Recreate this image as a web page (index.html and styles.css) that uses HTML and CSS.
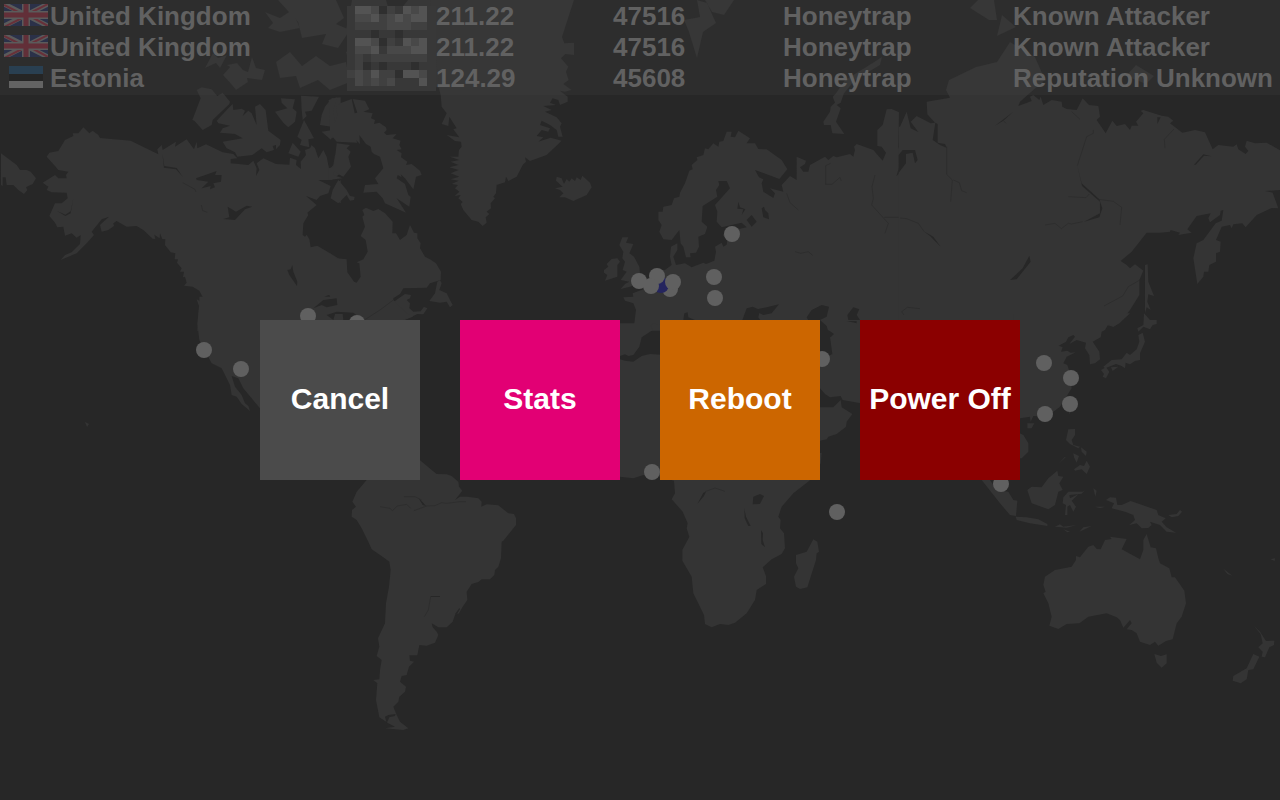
FILE: index.html
```html
<!DOCTYPE html>
<html lang="en">
<head>
<meta charset="utf-8">
<meta name="viewport" content="width=device-width, initial-scale=1">
<title>Attack map</title>
<link rel="stylesheet" href="styles.css">
</head>
<body>
<svg class="map" viewBox="0 0 1280 800" preserveAspectRatio="xMidYMin slice" aria-hidden="true">
  <!-- Alaska and western Canada -->
  <g class="land" transform="translate(0 90) scale(.33333)">
    <path d="M140 200L148 188 175 183 195 150 220 138 218 130 235 130 250 112 268 130 278 122 295 135 300 144 392 152 475 193 472 178 485 165 488 180 528 155 525 170 560 148 582 178 590 155 592 175 618 163 668 187 700 192 712 205 692 207 692 220 745 225 760 212 770 235 768 258 778 240 770 220 790 205 828 222 868 224 870 203 890 210 888 225 903 237 902 215 918 195 915 180 930 175 935 165 945 175 955 205 970 180 980 200 988 240 1000 225 1005 195 1022 190 1022 250 995 270 955 270 992 288 985 310 960 318 950 330 918 318 950 345 922 368 925 375 910 400 908 435 915 440 920 434 928 448 932 472 952 467 1022 509 1022 722 592 722 597 648 590 628 598 632 612 641 614 632 598 602 578 590 552 587 560 578 555 560 549 562 552 545 540 545 545 535 531 518 534 508 524 508 526 490 512 487 495 465 496 448 487 447 480 430 479 445 463 434 466 447 458 446 430 420 410 408 380 410 350 393 340 400 342 408 325 420 305 425 300 405 316 390 327 380 305 388 275 425 282 435 260 460 230 490 205 500 182 510 195 495 215 487 240 462 242 435 230 443 215 430 195 437 190 410 172 412 165 398 148 378 165 340 185 340 203 325 200 308 155 307 140 300 145 290 128 278 165 255 175 265 200 265 198 255 205 245 175 240 165 228z"/>
    <path d="M3 190L50 225 60 240 80 240 92 245 108 265 98 282 85 288 78 292 82 300 72 312 55 300 40 285 20 285 17 262 8 262 8 288 3 285z"/>
    <path d="M590 0L602 25 577 90 583 92 608 120 635 105 638 90 688 42 690 35 668 8 652 18 635 -2 605 -8z"/>
    <path d="M698 42L700 60 725 56 735 62 728 78 745 62 755 70 770 105 765 50 780 42 797 60 805 122 842 150 840 165 828 178 828 165 818 168 822 180 800 187 785 175 757 195 712 200 705 187 680 175 668 155 728 145 705 132 660 128 668 115 690 107 655 100 650 92 680 60z"/>
    <path d="M843 25L885 28 878 55 890 65 885 95 865 112 850 98 825 65 862 55 845 38zM903 17L957 20 935 62 915 65 920 78 908 90 905 60zM912 90L942 145 925 148 928 172 900 165 905 150 892 140zM878 158L902 185 895 200 865 190zM1022 22L995 25 975 50 965 75 960 105 1022 115zM965 125L1022 116 1022 145 1005 140 990 147zM1022 270L1008 283 995 322 1022 340z"/>
    <g class="water">
      <path d="M588 265L650 243 645 255 665 255 663 275 640 280 645 292 630 298 632 288 605 295 625 275 590 270zM683 350L708 365 740 347 757 350 735 358 705 390 670 387 688 382zM862 540L872 538 877 525 880 545 892 575 891 588 868 555z"/>
      <path d="M938 650L965 625 985 615 1012 625 1018 650 990 648 975 640 960 652zM985 690V675L1020 662V680L1000 682 1002 690z"/>
      <path d="M487 190L493 228 530 234 548 260 528 238 492 233zM170 362L196 374 212 364 220 325 212 370 196 378z"/>
    </g>
    <path class="river" d="M548 278L585 298 588 306M604 345L608 362 622 367"/>
  </g>

  <!-- Eastern Canada, Greenland, Iceland -->
  <g class="land" transform="translate(330 80) scale(.33333)">
    <path d="M-4 60L22 52 10 90 14 130 22 105 18 80 30 70 65 57 74 100 82 98 68 57 105 62 118 88 100 95 128 100 123 115 135 120 132 132 148 128 168 142 170 150 162 158 170 165 200 162 188 175 212 182 208 195 215 208 200 210 215 220 213 232 232 245 228 255 245 252 270 272 275 285 258 290 255 305 250 328 225 295 212 283 215 292 203 285 200 295 225 312 235 345 242 350 238 380 200 355 228 398 165 370 158 355 140 335 100 338 105 315 145 312 135 295 160 265 150 230 132 222 125 215 122 200 108 192 88 165 90 192 78 180 82 188 20 185 8 170 0 180V145z"/>
    <path d="M20 190L60 195 50 205 62 215 55 230 63 260 40 290 12 275 10 285 38 295 -4 300V265L12 260zM25 300L50 330 60 348 74 350 72 360 60 362 50 345 25 370 2 355 8 330z"/>
    <path d="M97 390L108 383 130 393 145 387 165 400 188 425 187 460 198 460 210 480 230 465 240 435 252 458 262 460 262 475 272 490 270 505 285 530 300 538 318 550 333 575 332 600 300 610 290 623 220 625 210 642 185 658 180 668 140 703 185 670 225 642 243 645 240 655 230 660 240 670 238 685 250 695 272 694 282 680 292 685 280 703 262 702 225 720 200 750H0V520L20 535 50 538 52 577 72 605 80 608 92 590 88 550 80 547 100 538 113 515 107 480 92 468 105 440 97 410 103 405z"/>
    <path d="M298 663L315 640 322 605 330 600 335 610 328 630 350 640 360 660 368 675 360 682 350 665 330 668z"/>
    <path d="M246 -240H732L696 -129 703 -110 732 -112 732 -75 706 -78 693 -65 715 -40 708 -25 716 0 700 12 725 30 705 35 690 32 713 50 713 65 690 75 685 60 668 55 660 68 678 75 640 78 665 90 645 95 680 112 695 130 690 140 698 170 685 170 680 150 660 135 635 122 630 135 660 145 655 155 635 150 620 168 640 172 625 185 662 173 695 182 650 225 600 243 585 232 588 245 578 255 560 290 535 303 528 290 525 307 500 315 498 340 490 350 495 355 482 370 483 385 470 395 478 402 467 412 470 428 458 438 445 425 425 420 400 390 392 372 398 366 385 355 392 345 374 348 388 335 375 325 384 315 365 312 386 302 362 298 388 290 362 280 386 270 358 262 385 255 362 245 388 240 360 230 385 230 387 210 395 200 393 185 375 183 350 165 388 172 370 148 380 145 358 110 355 138 335 132 350 100 335 80 332 45 320 0z"/>
    <path d="M675 325L698 320 678 302 680 290 695 295 702 312 710 297 718 305 725 295 735 303 740 292 752 300 757 287 780 308 785 322 770 345 730 363 705 352 688 352 700 340 690 330z"/>
    <g class="water"><path d="M0 650L8 655 28 675 30 684 70 690 78 708 62 720 40 705 40 694 0 695V683L28 684 0 680z"/></g>
  </g>

  <!-- High Arctic islands -->
  <g class="land">
    <path d="M265 12L280 18 292 10 300 28 280 32 268 28 273 23zM205 68L213 53 218 58 227 55 220 68 216 63zM223 75L230 67 227 65 237 63 243 70 248 72 252 57 256 68 265 70 262 80 247 78 248 82 236 90 232 85z"/>
    <path d="M278 0H336L344 18 336 24 350 30 338 48 322 44 326 34 302 38 298 22zM276 62L290 52 302 66 316 56 330 66 346 62 350 82 330 90 318 80 300 88 296 76 280 78zM352 0H386L392 20 408 0H430L436 60 440 88 402 78 380 88 352 74 346 52 362 44 346 30z"/>
    <path d="M697 0L700 17 684 20 689 32 697 58 703 32 716 23 707 3zM705 0H734L724 15 712 12zM970 8L978 0H994L997 20H989zM997 36L1002 15 1016 27zM1126 76L1136 65 1154 76 1146 84z"/>
  </g>

  <!-- Europe and western Russia -->
  <g class="land" transform="translate(590 80) scale(.33333)">
    <path d="M42 570L55 560 50 552 65 537 82 535 90 545 82 555V590L45 602 52 585 42 578zM97 472L115 472 108 488 130 492 118 520 132 530 148 560 150 580 165 590 150 610 120 620 92 627 105 612 118 605 92 600 110 575 98 570 105 545 97 535 100 515 88 495z"/>
    <path d="M205 395L218 395 220 380 245 375 252 355 268 350 270 338 285 310 298 272 308 268 305 255 322 240 320 232 340 225 345 205 355 208 370 190 385 200 388 185 400 183 410 155 425 155 422 170 435 172 445 152 465 165 480 175 470 190 495 190 505 207 530 208 575 240 592 268 568 297 495 270 507 292 520 298 515 310 520 335 550 354 555 340 540 325 580 335 575 315 600 288 620 300V230L648 242 645 252 630 262 640 275 655 275 660 255 705 230 715 240 730 228 740 232 780 222 790 230 795 210 792 200 800 192 850 210 878 242 888 218 875 200 862 198V150L878 135 890 88 905 87 927 97 925 200 935 235 918 293 880 282 918 290 945 260 950 225 965 218 970 245 992 255V752H130L138 690 130 670 105 662 100 652 130 650 128 640 160 628 200 575 225 570 245 555 240 530 243 500 262 490 262 510 250 530 258 555 285 550 305 562 340 548 348 552 373 542 378 515 375 500 395 488 400 500 410 494 412 478 398 465 410 455 470 442 455 428 395 442 380 425 382 395 375 375 420 325 410 303 385 303 388 315 378 330 382 350 338 378 335 425 352 440 345 462 325 470 327 500 318 518 300 520 302 532 288 532 280 500 272 490 268 450 245 480 220 478 208 455 215 435 205 420z"/>
    <path d="M765 0L738 40 728 50 735 68 722 80 720 95 700 125 702 135 722 135 727 160 763 162 738 125 752 85 740 75 752 68 762 40 795 0 870 -45 876 -69 830 -40z"/>
    <g class="water">
      <path d="M515 385L522 380 525 390 535 400 537 418 520 412zM485 405L500 425 485 440 470 420zM445 365L450 382 466 388 455 405 460 388 442 386zM457 720L470 685 488 680 510 690 505 712 530 750H457zM490 690L530 682 567 673 545 700 520 705zM650 712L665 690 695 675 717 680 710 710 690 720 700 750H670zM772 705L790 682 808 688 800 705 810 720 790 735 775 720zM280 720L283 700 293 697 295 712 315 720z"/>
    </g>
    <path class="river" d="M722 250L707 257V313H726L750 292 754 303M590 340L600 368 625 390M855 285L846 320 850 355 845 375 895 430 885 460M615 515L632 520 655 515 668 526M883 412H945L990 430"/>
  </g>

  <!-- Siberia and the Far East -->
  <g class="land" transform="translate(900 80) scale(.33333)">
    <path d="M0 140L20 95 32 145 55 156 32 125 50 108 92 130 105 128 82 103 80 65 150 53 138 30 147 0 228 -39 291 -54 330 -114 405 -69 435 0 400 30 360 65 355 78 395 63 390 50 400 45 418 60 422 50 430 75 455 60 485 65 487 80 500 87 530 90 548 55 567 75 595 78 600 110 590 120 617 160 637 122 650 138 675 132 690 150 695 137 715 137 708 125 730 100 722 92 730 90 785 107 805 110 820 122 810 130 847 158 885 150 915 157 938 208 955 195 1000 200 1010 193 1015 208 1037 222 1045 213 1035 200 1040 182 1065 190 1100 188 1142 212V330L1095 333 1118 338 1135 385 1115 384 1070 405 1037 442 1027 430 1000 433 995 445 990 435 965 440 948 480 962 485 960 515 948 520 948 545 928 555 925 575 912 575 910 590 892 612 880 535 890 490 910 480 947 430 965 422 970 390 962 392 960 405 930 427 925 415 932 400 890 408 862 448 875 458 835 465 840 458 812 450 810 455 780 458 740 458 695 515 662 543 680 555 690 565 705 553 730 572 718 600 718 645 690 690 660 728 640 740 620 735 610 752H-4V140z"/>
    <g class="water">
      <path d="M106 128L113 132V188L135 192 141 204 120 195 98 180zM8 210L45 210 53 240 45 250 38 218 18 222V250L-4 278V225zM552 425L600 400V365L546 318 532 257 545 310 598 358 607 385 598 412zM330 600L368 565 388 527 392 545 350 598zM285 137L340 95 310 122zM70 453L100 470 122 500 90 468zM890 245L910 223 935 229 912 227 887 254 865 258 882 255zM772 112L782 112 772 132z"/>
    </g>
    <path class="river" d="M532 257L560 170 580 160V150M595 358L640 364 665 382 660 435M548 425L515 432 505 430 484 446 465 430 435 435M505 350L558 353 568 342M140 200V283L157 300 152 365M160 300L178 308 185 332 200 338M0 414L20 416 55 430 72 454M515 95L540 118M822 147L793 178 795 205M310 122L318 130M612 678L668 648 685 620 720 600M60 686L22 682 5 695 12 705"/>
  </g>

  <!-- United States and Mexico -->
  <g class="land" transform="translate(180 300) scale(.33333)">
    <path d="M58 -10V15L52 70 58 120 95 190 125 205 150 255 155 285 170 290 185 312 210 333 205 318 195 310 185 285 165 260 155 228 175 235 190 265 240 325 300 380 480 400 600 200 650 65 700 50 680 40 640 0V-10z"/>
    <g class="water"><path d="M400 25L430 0 470 -5 472 15 440 22 425 15zM440 45L470 35 520 38 550 60H490L488 42 465 42 460 60z"/></g>
    <path class="river" d="M550 62L600 30 640 0"/>
  </g>

  <!-- South America -->
  <g class="land" transform="translate(340 470) scale(.33333)">
    <path d="M80 30L200 -60 242 -28 275 0 290 12 320 13 335 18 355 35 357 50 367 62 345 90 360 80 382 80 415 85 425 95 424 110 440 103 475 106 505 130 522 132 528 145V165L490 212 485 215 483 265 475 290 465 300 463 315 450 328 425 328 415 336 395 342 380 365 382 390 368 410 357 430 345 435 338 455 320 472 295 472 275 460 278 472 290 485 295 495 285 518 260 527 238 525 232 556H208L210 572 222 575 207 590 200 615 185 618 180 635 198 650 195 665 178 680 175 695 160 710 170 735 180 755 205 775 190 780 135 775 165 770 145 760 118 742 108 690 112 640 100 630 118 628 120 600 125 570 110 558 118 530 114 505 135 460 138 400 147 350 152 300 148 275 130 262 95 238 85 215 65 175 50 150 35 140 36 120 48 110 37 95 50 65z"/>
    <g class="water"><path d="M235 83L250 98 258 108 248 105zM345 432L358 414 360 418 348 437zM272 378H300V381H272zM135 740L145 735 167 732 165 738 148 742 140 760z"/></g>
    <path class="river" d="M120 110L150 115 157 122 172 108 200 103 212 115M222 122L260 108 285 107 305 98 320 100 360 95 378 95M192 80H225L245 90M272 380L265 420 253 440"/>
  </g>

  <!-- Africa, Iberia and the Middle East -->
  <g class="land" transform="translate(600 320) scale(.33333)">
    <path d="M60 10H105V0H182V15L160 10 152 18 158 30 125 52 118 80 100 105 85 108 75 103 60 108zM60 118L75 122 100 125 125 108 150 102 182 104 400 130 520 200 600 330 640 402 665 398 662 430 628 482 580 520 545 560 535 590 542 600 540 625 552 640 555 685 545 702 515 718 488 742 498 768V792L470 810 465 840 440 880 405 908 385 915 360 912 335 922 315 912 312 885 280 820 275 770 247 722V690L268 650 260 625 263 610 248 575 215 538 225 520 222 482 180 470 130 465 100 475 60 470z"/>
    <path d="M640 658L652 665 657 695 650 700 648 720 622 802 600 807 588 800 582 770 595 745 588 730V705L620 695zM660 0H782V250L728 240 722 228 690 232 675 222 660 205zM660 262H700L722 240 725 262 757 282 740 305 738 320 710 342 685 350 680 358 660 362z"/>
    <g class="water">
      <path d="M660 0L680 18 690 50 697 102 660 120zM685 30L702 42 692 52 684 45zM740 3H770V10zM460 530L480 522 492 528 480 552 458 553zM433 565L438 590 452 618 445 618 434 595zM483 630L489 640 488 660 495 682 484 672zM292 552L310 518 318 515 312 528z"/>
    </g>
    <path class="river" d="M315 515L345 504 375 514"/>
  </g>

  <!-- East Asia and Japan -->
  <g class="land" transform="translate(980 260) scale(.33333)">
    <path d="M100 160H450L420 188 400 200 385 193 375 210 365 215 362 232 338 245 358 275 360 298 345 310 330 313 328 285 315 265 318 248 290 240 268 252 285 230 280 225 265 232 258 245 236 257 248 262 243 275 262 272 272 278 287 277 260 290 250 310 262 315 270 340 275 385 262 405 240 440 200 470 160 468 152 485 150 470 120 475H100zM110 515L130 525 145 550V575L125 595H110zM142 490L163 490 155 505 142 505zM262 440L275 448 269 463z"/>
    <path d="M475 225L488 218 495 245 480 280V300L465 303 450 313 437 308 435 325 425 318 408 312 375 325 370 320 395 300 425 298 440 278 450 285 470 268 478 245zM363 330L378 322 388 335 378 355 368 350 372 342zM393 322L415 320 398 333zM492 160L510 180 530 180V192L518 195 510 208 490 200 475 215 472 205 490 195zM495 15L503 13 505 65 522 108 505 103 502 125 512 150 500 142 495 160z"/>
    <path d="M265 508L285 507V525L275 540 280 555 300 560 295 565 270 552 258 540zM280 580L297 588 290 608 282 592zM303 562L320 575 318 588 305 575zM282 628L300 615 312 618 320 602 330 620 320 642 305 628 285 632zM235 612L255 590 257 592z"/>
    <path d="M142 690L155 680 185 682 205 655 232 632 235 648 250 650 238 670 248 690 235 695 225 735 205 748 155 730zM250 712L265 695 308 695 315 690 305 701 268 705 270 715 295 703 275 722 288 740 280 755 270 735 262 740V765L255 765 258 735 248 730zM340 685L350 692 346 710z"/>
    <path d="M5 660H30L50 690 85 695 100 720 112 722 108 768 90 765 60 730zM107 770L140 772 175 778 202 792V798L150 790 110 780z"/>
  </g>

  <!-- Oceania -->
  <g class="land" transform="translate(980 470) scale(.33333)">
    <path d="M378 90L390 82 408 83 412 105 425 105 452 93 530 120 535 135 557 145 545 155 560 172 588 188 560 185 540 165 510 155 515 165 505 174 485 175 470 160 448 165 465 150 460 135 435 125 395 115 402 100zM565 135L590 132 600 120 606 125 595 138 575 142zM298 185L310 172 335 168zM225 170L240 163 250 170 290 165 260 173zM250 178L270 185 262 187zM345 110L375 110 360 115z"/>
    <path d="M195 320L225 300 275 290 288 270V258L300 262 325 230 340 225 350 237 362 238 375 210 395 207 390 200 440 207 425 238 480 268 490 240 490 210 500 192 512 232 528 235 535 265 540 280 568 295 575 322 585 322 613 362 618 400 605 440 590 460 578 508 558 513 535 527 525 515 510 525 480 515 470 490 455 480 440 478 455 460 450 450 430 473 420 450 410 442 380 430 325 440 298 460 260 462 235 477 208 467 215 440 205 400 190 370 197 365 190 345z"/>
    <path d="M523 552L543 558 560 553V580L545 593 530 578zM822 468L840 485 858 513 883 512 882 525 868 532 855 562 845 560 848 545 835 532 848 520 842 492zM820 552L838 560 820 598 805 600 800 628 782 640 758 632 760 618 800 595zM730 296L757 317 742 312zM872 268L885 265 884 273z"/>
  </g>

  <!-- Hawaii -->
  <path class="land" d="M85 422l4 2-2 3z"/>

  <g class="attack">
    <circle cx="732" cy="234" r="8"/><circle cx="670" cy="289" r="8"/>
    <circle class="home" cx="661" cy="285" r="8"/>
    <circle cx="657" cy="276" r="8"/><circle cx="639" cy="281" r="8"/><circle cx="651" cy="286" r="8"/>
    <circle cx="673" cy="282" r="8"/><circle cx="714" cy="277" r="8"/><circle cx="715" cy="298" r="8"/>
    <circle cx="308" cy="316" r="8"/><circle cx="357" cy="323" r="8"/><circle cx="204" cy="350" r="8"/><circle cx="241" cy="369" r="8"/>
    <circle cx="822" cy="359" r="8"/><circle cx="652" cy="472" r="8"/><circle cx="837" cy="512" r="8"/><circle cx="1001" cy="484" r="8"/>
    <circle cx="1044" cy="363" r="8"/><circle cx="1071" cy="378" r="8"/><circle cx="1070" cy="404" r="8"/><circle cx="1045" cy="414" r="8"/>
  </g>
  <symbol id="flag-uk" viewBox="0 0 44 22">
    <path fill="#2b3149" d="M0 0h44v22H0z"/>
    <path stroke="#5b5b5b" stroke-width="5" d="M0 0l44 22M44 0L0 22"/>
    <path stroke="#683039" stroke-width="2" d="M0 1l22 11M22 11L44 0M22 12L0 23M22 10l22 12"/>
    <path stroke="#5b5b5b" stroke-width="8" d="M22 0v22M0 11h44"/>
    <path stroke="#622f38" stroke-width="5" d="M22 0v22M0 11h44"/>
  </symbol>
</svg>

<div class="screen">
  <table class="events">
    <colgroup><col class="c-flag"><col class="c-country"><col class="c-mask"><col class="c-ip"><col class="c-port"><col class="c-sensor"><col class="c-rep"></colgroup>
    <tbody>
      <tr>
        <td><svg class="flag flag-wide" viewBox="0 0 44 22" role="img" aria-label="Flag of the United Kingdom"><use href="#flag-uk"/></svg></td>
        <td>United Kingdom</td>
        <td rowspan="3" class="mask">
          <svg viewBox="0 0 89 85" aria-hidden="true" shape-rendering="crispEdges">
            <path fill="#383838" d="M0 0h89v85H0z"/>
            <g stroke-width="8">
              <path stroke="#2f2f2f" d="M32 4h8M24 28h8M48 28h8M32 36h8M16 60h8M16 68h8M64 60h8M32 60h8M48 68h8"/>
              <path stroke="#404040" d="M40 4h8M8 20h32M64 20h16M32 12h8M40 36h8M8 52h8M24 52h56M40 68h8M16 68h8M32 68h16M16 76h8M32 76h8M8 60h8M0 68h8"/>
              <path stroke="#484848" d="M24 4h8M64 4h8M8 12h16M40 12h8M56 12h8M40 20h24M24 36h8M64 36h8M8 44h16M40 44h24M8 68h8M24 76h8M8 76h8M40 76h8M72 68h8"/>
              <path stroke="#535353" d="M8 4h16M56 4h8M72 4h8M24 12h8M48 12h8M64 12h16M8 36h16M56 36h8M72 36h8M24 44h8M64 44h16M24 68h8M56 68h16M72 76h8"/>
            </g>
          </svg>
        </td>
        <td>211.22</td><td>47516</td><td>Honeytrap</td><td>Known Attacker</td>
      </tr>
      <tr>
        <td><svg class="flag flag-wide" viewBox="0 0 44 22" role="img" aria-label="Flag of the United Kingdom"><use href="#flag-uk"/></svg></td>
        <td>United Kingdom</td>
        <td>211.22</td><td>47516</td><td>Honeytrap</td><td>Known Attacker</td>
      </tr>
      <tr>
        <td><svg class="flag" viewBox="0 0 34 22" role="img" aria-label="Flag of Estonia" shape-rendering="crispEdges"><path fill="#293f51" d="M0 0h34v8H0z"/><path fill="#252525" d="M0 8h34v7H0z"/><path fill="#636363" d="M0 15h34v7H0z"/></svg></td>
        <td>Estonia</td>
        <td>124.29</td><td>45608</td><td>Honeytrap</td><td>Reputation Unknown</td>
      </tr>
    </tbody>
  </table>
</div>

<div class="dialog" role="dialog" aria-label="System menu">
  <button class="tile tile-cancel" type="button">Cancel</button>
  <button class="tile tile-stats" type="button">Stats</button>
  <button class="tile tile-reboot" type="button">Reboot</button>
  <button class="tile tile-power" type="button">Power Off</button>
</div>
</body>
</html>
```

FILE: styles.css
```css
* { box-sizing: border-box; }

body {
  margin: 0;
  min-height: 100vh;
  background: #272727;
  color: #616161;
  font-family: "Liberation Sans", Arial, sans-serif;
  font-weight: 700;
  overflow: hidden;
}

.map {
  position: absolute;
  inset: 0;
  width: 100%;
  height: 100%;
}

.land { fill: #343434; }
.water { fill: #272727; }
.river { fill: none; stroke: #2b2b2b; stroke-width: 2; }
.attack { fill: #606060; }
.home { fill: #25255e; }

.screen {
  position: relative;
  padding: 1px 0;
  background: rgba(63, 63, 63, 0.25);
}

.events {
  width: 100%;
  table-layout: fixed;
  border-collapse: collapse;
  font-size: 26px;
  line-height: 31px;
  white-space: nowrap;
}

.events td {
  height: 31px;
  padding: 0;
  vertical-align: top;
}

.c-flag { width: 50px; }
.c-country { width: 297px; }
.c-mask { width: 89px; }
.c-ip { width: 177px; }
.c-port { width: 170px; }
.c-sensor { width: 230px; }

.flag {
  display: block;
  width: 34px;
  height: 22px;
  margin: 3px 0 0 9px;
}

.flag-wide {
  width: 44px;
  margin-left: 4px;
}

.mask svg {
  display: block;
  width: 89px;
  height: 85px;
  margin-top: 5px;
}

.dialog {
  position: absolute;
  inset: 0;
  display: flex;
  flex-wrap: wrap;
  align-items: center;
  align-content: center;
  justify-content: center;
  gap: 40px;
}

.tile {
  width: 160px;
  height: 160px;
  padding: 0 0 2px;
  border: 0;
  color: #fff;
  font: inherit;
  font-size: 30px;
  white-space: nowrap;
  cursor: pointer;
}

.tile-cancel { background: #4b4b4b; }
.tile-stats { background: #e20074; }
.tile-reboot { background: #cc6600; }
.tile-power { background: #8b0000; }
```
